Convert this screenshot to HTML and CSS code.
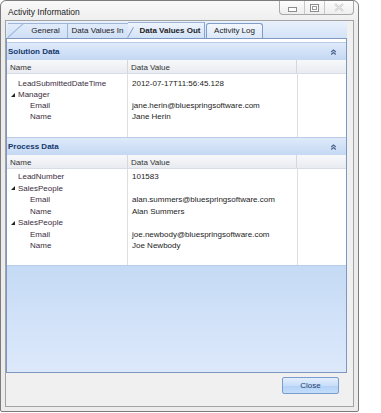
FILE: index.html
```html
<!DOCTYPE html>
<html>
<head>
<meta charset="utf-8">
<link rel="stylesheet" href="styles.css">
</head>
<body>
<div class="window">
  <div class="titlebar">
    <span class="title">Activity Information</span>
    <div class="caption">
      <span class="cbtn cmin"><svg width="9" height="5" viewBox="0 0 9 5"><rect x="0.5" y="0.5" width="8" height="4" fill="#fff" stroke="#8d8d8d"/></svg></span>
      <span class="cbtn cmax"><svg width="9" height="8" viewBox="0 0 9 8"><rect x="0.5" y="0.5" width="8" height="7" fill="#fff" stroke="#8d8d8d"/><rect x="2.5" y="2.5" width="4" height="3" fill="none" stroke="#9a9a9a"/></svg></span>
      <span class="cbtn cclose"><svg width="10" height="9" viewBox="0 0 10 9"><path d="M1 1 L9 8 M9 1 L1 8" stroke="#c9c9c9" stroke-width="2.2"/><path d="M1 1 L9 8 M9 1 L1 8" stroke="#f4f4f4" stroke-width="0.8"/></svg></span>
    </div>
  </div>
  <div class="client">
    <div class="tabctl">
      <div class="tabs">
        <div class="tab first">General</div>
        <div class="tab second">Data Values In</div>
        <div class="tab active">Data Values Out</div>
        <div class="tab last">Activity Log</div>
      </div>
      <div class="page">
        <section class="group">
          <div class="ghead"><span>Solution Data</span><svg class="chev" width="7" height="6" viewBox="0 0 7 6"><path d="M1.2 3 L3.5 1 L5.8 3 M1.2 5.5 L3.5 3.5 L5.8 5.5" fill="none" stroke="#4a6489" stroke-width="1.1"/></svg></div>
          <div class="colhead"><div class="c1">Name</div><div class="c2">Data Value</div><div class="c3"></div></div>
          <div class="gbody sol">
            <div class="row"><div class="c1 l1">LeadSubmittedDateTime</div><div class="c2">2012-07-17T11:56:45.128</div></div>
            <div class="row"><div class="c1 l0"><span class="tri"></span>Manager</div><div class="c2"></div></div>
            <div class="row"><div class="c1 l2">Email</div><div class="c2">jane.herin@bluespringsoftware.com</div></div>
            <div class="row"><div class="c1 l2">Name</div><div class="c2">Jane Herin</div></div>
          </div>
        </section>
        <section class="group">
          <div class="ghead"><span>Process Data</span><svg class="chev" width="7" height="6" viewBox="0 0 7 6"><path d="M1.2 3 L3.5 1 L5.8 3 M1.2 5.5 L3.5 3.5 L5.8 5.5" fill="none" stroke="#4a6489" stroke-width="1.1"/></svg></div>
          <div class="colhead"><div class="c1">Name</div><div class="c2">Data Value</div><div class="c3"></div></div>
          <div class="gbody proc">
            <div class="row"><div class="c1 l1">LeadNumber</div><div class="c2">101583</div></div>
            <div class="row"><div class="c1 l0"><span class="tri"></span>SalesPeople</div><div class="c2"></div></div>
            <div class="row"><div class="c1 l2">Email</div><div class="c2">alan.summers@bluespringsoftware.com</div></div>
            <div class="row"><div class="c1 l2">Name</div><div class="c2">Alan Summers</div></div>
            <div class="row"><div class="c1 l0"><span class="tri"></span>SalesPeople</div><div class="c2"></div></div>
            <div class="row"><div class="c1 l2">Email</div><div class="c2">joe.newbody@bluespringsoftware.com</div></div>
            <div class="row"><div class="c1 l2">Name</div><div class="c2">Joe Newbody</div></div>
          </div>
        </section>
        <div class="fill"></div>
      </div>
    </div>
    <div class="footer"><button class="btn">Close</button></div>
  </div>
</div>
</body>
</html>
```

FILE: styles.css
```css
* { box-sizing: border-box; }
html, body { margin: 0; padding: 0; background: #ffffff; }
body { font-family: "Liberation Sans", Arial, sans-serif; font-size: 8px; color: #222; }

.window {
  width: 359px;
  height: 412px;
  border: 1px solid #7c7c7c;
  border-radius: 6px 6px 2px 2px;
  background: #ececec;
  padding: 0 4px 4px 4px;
  display: flex;
  flex-direction: column;
}

.titlebar {
  height: 19px;
  display: flex;
  align-items: flex-start;
  background: linear-gradient(#f9f9f9, #efefef);
  margin: 0 -4px;
  padding: 0 4px 0 6px;
  border-radius: 6px 6px 0 0;
}
.title { font-size: 8.5px; color: #1a1a1a; margin-top: 6px; margin-left: 1px; }
.caption {
  margin-left: auto;
  display: flex;
  height: 14px;
  border: 1px solid #a8a8a8;
  border-top: none;
  border-radius: 0 0 4px 4px;
  background: linear-gradient(#fdfdfd, #eeeeee);
}
.cbtn { display: flex; align-items: center; justify-content: center; }
.cmin { width: 25px; border-right: 1px solid #c8c8c8; }
.cmin svg { margin-top: 3px; }
.cmax { width: 20px; border-right: 1px solid #c8c8c8; }
.cclose { width: 28px; }

.client {
  flex: 1;
  border: 1px solid #a3a3a3;
  background: #f0f0f0;
  display: flex;
  flex-direction: column;
}

.tabctl {
  width: 341px;
  height: 352px;
  display: flex;
  flex-direction: column;
}

.tabs {
  height: 17px;
  display: flex;
  align-items: flex-end;
  background: linear-gradient(#e9f1fc, #d4e3f7);
  padding-left: 2px;
}
.tab {
  position: relative;
  height: 15px;
  line-height: 14px;
  font-size: 8px;
  color: #222;
  border-top: 1px solid #9db4d6;
  border-right: 1px solid #9db4d6;
  background: linear-gradient(#e1ecfb, #cfdff5);
  text-align: center;
}
.tab.first { width: 60px; padding-left: 16px; }
.tab.first::before {
  content: "";
  position: absolute;
  left: 0;
  bottom: 0;
  width: 21px;
  height: 1px;
  background: #9db4d6;
  transform-origin: left bottom;
  transform: rotate(-42deg);
}
.tab.second { width: 66px; padding-right: 6px; overflow: hidden; white-space: nowrap; }
.tab.active {
  width: 77px;
  font-weight: bold;
  margin-left: -6px;
  padding-left: 8px;
  height: 16px;
  line-height: 15px;
  background: linear-gradient(#eef4fd, #d2e2f7);
  border-right: 1px solid #8aa4cc;
}
.tab.active::before {
  content: "";
  position: absolute;
  left: 0;
  bottom: 0;
  width: 12px;
  height: 1px;
  background: #8aa4cc;
  transform-origin: left bottom;
  transform: rotate(-60deg);
}
.tab.last {
  width: 57px;
  border: 1px solid #7e9cc9;
  border-bottom: none;
  border-radius: 3px 3px 0 0;
  background: linear-gradient(#f3f7fd, #dce8f8);
  margin-left: 1px;
}

.page {
  flex: 1;
  border: 1px solid #7d97c0;
  display: flex;
  flex-direction: column;
  background: #fff;
  padding-top: 3px;
}

.group { display: flex; flex-direction: column; }
.ghead {
  height: 18px;
  display: flex;
  align-items: center;
  justify-content: space-between;
  padding: 0 9px 0 1px;
  background: linear-gradient(#dfeafa, #c4d8f3);
  border-top: 1px solid #b9cde9;
  font-weight: bold;
  color: #15386e;
  font-size: 8px;
}

.colhead {
  height: 14px;
  display: grid;
  grid-template-columns: 121px 169px 1fr;
  background: linear-gradient(#f7f8fa, #e8ebf0);
  border-bottom: 1px solid #d8dde5;
  color: #333;
}
.colhead > div { padding-top: 3px; border-right: 1px solid #d3d7de; }
.colhead .c1 { padding-left: 3px; }
.colhead .c2 { padding-left: 3px; }
.colhead .c3 { border-right: none; }

.gbody {
  background-image:
    linear-gradient(90deg, transparent 120px, #dedede 120px, #dedede 121px, transparent 121px),
    linear-gradient(90deg, transparent 290px, #dedede 290px, #dedede 291px, transparent 291px);
}
.gbody.sol { height: 63px; padding-top: 4px; }
.gbody.proc { height: 96px; padding-top: 2px; }
.gbody.proc .row { height: 11.5px; }

.row {
  height: 11px;
  display: grid;
  grid-template-columns: 121px 169px;
  line-height: 11px;
  white-space: nowrap;
}
.row .c1 { color: #3a2d3e; }
.row .c2 { padding-left: 4px; color: #1c1c1c; }
.l0 { padding-left: 4px; display: flex; align-items: center; }
.l1 { padding-left: 11px; }
.l2 { padding-left: 23px; }
.tri {
  width: 0;
  height: 0;
  border-left: 4px solid transparent;
  border-bottom: 4px solid #222;
  margin-right: 3px;
}

.fill {
  flex: 1;
  background: linear-gradient(#c5daf5, #dde9fb);
  border-top: 1px solid #b9cde9;
}

.footer {
  flex: 1;
  display: flex;
  justify-content: flex-end;
  align-items: flex-start;
  padding: 4px 14px 0 0;
}
.btn {
  width: 57px;
  height: 17px;
  font-family: "Liberation Sans", Arial, sans-serif;
  font-size: 8px;
  color: #1b3f6e;
  border: 1px solid #7a9dd0;
  border-radius: 2px;
  background: linear-gradient(#e3eefd 0%, #c9defa 50%, #b3d1f6 51%, #c3dcfa 100%);
  padding: 0;
}
```
